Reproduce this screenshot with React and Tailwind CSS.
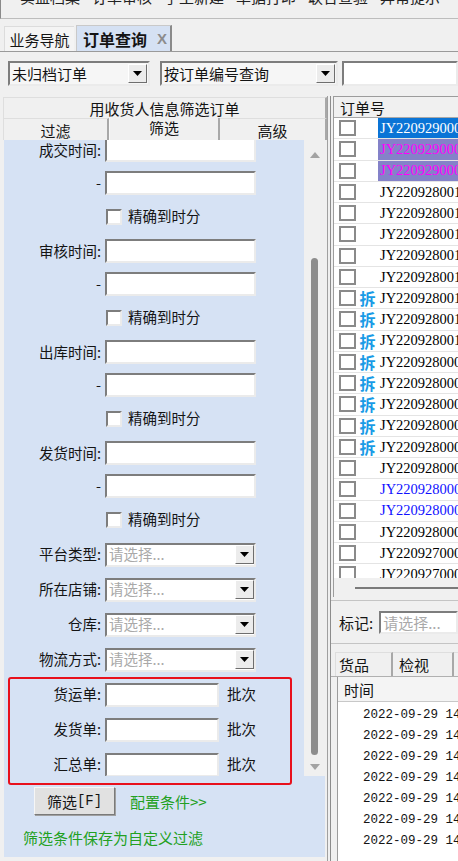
import React from 'react'

const cjk = "font-['Noto_Sans_CJK_SC','Noto_Sans',sans-serif]"
const sunken =
  'border-2 border-t-[#7d7d7d] border-l-[#7d7d7d] border-r-[#ebebeb] border-b-[#ebebeb]'
const raised =
  'border border-t-white border-l-white border-r-[#6e6e6e] border-b-[#6e6e6e]'

function Arrow() {
  return (
    <svg width="9" height="5" viewBox="0 0 9 5">
      <path d="M0 0h9L4.5 5z" fill="#000" />
    </svg>
  )
}

function DropBtn({ className = '' }) {
  return (
    <div className={`w-[19px] h-[19px] bg-[#ececec] flex items-center justify-center ${raised} ${className}`}>
      <Arrow />
    </div>
  )
}

function Combo({ className, text }) {
  return (
    <div className={`h-[25px] bg-[#f6f6f6] flex items-center ${sunken} ${className}`}>
      <span className="flex-1 pl-[2px] text-[15px] leading-none whitespace-nowrap">{text}</span>
      <DropBtn className="mr-[1px]" />
    </div>
  )
}

function TextBox({ className }) {
  return <div className={`h-[24px] bg-white ${sunken} ${className}`} />
}

function Label({ children }) {
  return (
    <div className="w-[98px] pr-[1px] text-right text-[14.5px] leading-none whitespace-nowrap">
      {children}
    </div>
  )
}

function DateGroup({ label }) {
  return (
    <>
      <div className="h-[34px] flex items-center">
        <Label>{label}:</Label>
        <TextBox className="ml-[3px] w-[151px]" />
      </div>
      <div className="h-[32px] flex items-center">
        <Label>-</Label>
        <TextBox className="ml-[3px] w-[151px]" />
      </div>
      <div className="h-[35px] flex items-center">
        <div className={`ml-[102px] w-[16px] h-[16px] bg-white ${sunken}`} />
        <span className="ml-[6px] text-[14.5px] leading-none">精确到时分</span>
      </div>
    </>
  )
}

function SelectRow({ label }) {
  return (
    <div className="h-[35px] flex items-center">
      <Label>{label}:</Label>
      <div className={`ml-[3px] w-[151px] h-[24px] bg-white flex items-center ${sunken}`}>
        <span className="flex-1 pl-[2px] text-[14.5px] text-[#a9a9a9] leading-none">请选择...</span>
        <DropBtn />
      </div>
    </div>
  )
}

function BatchRow({ label, h }) {
  return (
    <div className={`${h} flex items-center`}>
      <Label>{label}:</Label>
      <TextBox className="ml-[3px] w-[114px]" />
      <span className="ml-[8px] text-[14.5px] leading-none">批次</span>
    </div>
  )
}

const orders = [
  { no: 'JY22092900018', kind: 'sel' },
  { no: 'JY22092900017', kind: 'purple' },
  { no: 'JY22092900016', kind: 'purple' },
  { no: 'JY22092800198' },
  { no: 'JY22092800197' },
  { no: 'JY22092800196' },
  { no: 'JY22092800195' },
  { no: 'JY22092800194' },
  { no: 'JY22092800193', split: true },
  { no: 'JY22092800192', split: true },
  { no: 'JY22092800191', split: true },
  { no: 'JY22092800099', split: true },
  { no: 'JY22092800098', split: true },
  { no: 'JY22092800097', split: true },
  { no: 'JY22092800096', split: true },
  { no: 'JY22092800095', split: true },
  { no: 'JY22092800094' },
  { no: 'JY22092800093', kind: 'blue' },
  { no: 'JY22092800092', kind: 'blue' },
  { no: 'JY22092800091' },
  { no: 'JY22092700029' },
  { no: 'JY22092700028' },
]

function OrderRow({ row }) {
  let cell = 'text-black'
  if (row.kind === 'sel') cell = 'bg-[#0a74d6] text-white'
  if (row.kind === 'purple') cell = 'bg-[#8482c8] text-[#ff00ff]'
  if (row.kind === 'blue') cell = 'text-[#1010ff]'
  return (
    <div className="h-[21.25px] flex items-stretch border-b border-[#e4e4e4] bg-white overflow-hidden">
      <div className="ml-[5px] self-center w-[17px] h-[16px] border-2 border-[#8a8a8a] bg-white" />
      <div className="w-[21px] ml-[1px] flex items-center justify-center overflow-hidden text-[16px] font-bold leading-none text-[#1a9be6]">
        {row.split ? '拆' : ''}
      </div>
      <div className={`flex-1 flex items-center pl-[2px] whitespace-nowrap overflow-hidden font-['Liberation_Serif',serif] text-[14.5px] leading-none ${cell}`}>
        {row.no}
      </div>
    </div>
  )
}

const dates = ['14:35:21', '14:33:08', '14:30:52', '14:28:17', '14:25:40', '14:21:03', '14:18:46']

function LeftPanel() {
  return (
    <div className="ml-[3px] w-[325px] flex flex-col border-r border-[#a0a0a0]">
      <div className="mt-[1px] h-[21px] flex items-center justify-center bg-[#f0f0f0] border-t border-l border-[#dedede] border-r-2 border-r-[#a8a8a8] text-[15px] leading-none">
        用收货人信息筛选订单
      </div>
      <div className="h-[22px] flex">
        <div className="w-[106px] h-[22px] flex items-center justify-center pt-[1px] border-t border-l border-[#dedede] border-r-2 border-r-[#a8a8a8] text-[15px] leading-none">
          过滤
        </div>
        <div className="w-[111px] h-[22px] flex items-start pt-[2px] justify-center border-l border-[#f8f8f8] border-r-2 border-r-[#a8a8a8] text-[15px] leading-none">
          筛选
        </div>
        <div className="flex-1 h-[22px] flex items-center justify-center pt-[1px] border-t border-[#dedede] border-r-2 border-r-[#a8a8a8] text-[15px] leading-none">
          高级
        </div>
      </div>
      <div className="pl-[1px]">
        <div className="h-[636px] flex">
          <div className="w-[300px] bg-[#d6e2f4] overflow-hidden">
            <div className="-mt-[7px]">
              <DateGroup label="成交时间" />
              <DateGroup label="审核时间" />
              <DateGroup label="出库时间" />
              <DateGroup label="发货时间" />
              <SelectRow label="平台类型" />
              <SelectRow label="所在店铺" />
              <SelectRow label="仓库" />
              <SelectRow label="物流方式" />
              <BatchRow label="货运单" h="h-[35px]" />
              <BatchRow label="发货单" h="h-[35px]" />
              <BatchRow label="汇总单" h="h-[35px]" />
            </div>
          </div>
          <div className="w-[21px] bg-[#f0f0f0] flex flex-col items-center">
            <svg className="mt-[12px]" width="10" height="6" viewBox="0 0 10 6">
              <path d="M0 6L5 0L10 6z" fill="#a3a3a3" />
            </svg>
            <div className="mt-[100px] w-[7px] h-[497px] rounded-full bg-[#8d8d8d]" />
            <svg className="mt-[9px]" width="10" height="6" viewBox="0 0 10 6">
              <path d="M0 0h10L5 6z" fill="#a3a3a3" />
            </svg>
          </div>
        </div>
        <div className="w-[321px] h-[81px] bg-[#d6e2f4]">
          <div className="pt-[11px] flex items-center">
            <div className="ml-[30px] w-[81px] h-[28px] flex items-center justify-center bg-[#e1e1e1] border border-t-[#f6f6f6] border-l-[#f6f6f6] border-r-[#7a7a7a] border-b-[#7a7a7a] shadow-[1px_1px_0_#a0a0a0] text-[15px] leading-none">
              筛选<span className="font-['Liberation_Mono',monospace] text-[14px]">[F]</span>
            </div>
            <span className="ml-[15px] text-[15px] leading-none text-[#22a022]">配置条件&gt;&gt;</span>
          </div>
          <div className="mt-[15px] ml-[19px] text-[15px] leading-none text-[#22a022]">
            筛选条件保存为自定义过滤
          </div>
        </div>
      </div>
    </div>
  )
}

function RightPanel() {
  return (
    <div className="ml-[2px] flex-1 flex flex-col border-l border-[#8c8c8c] min-w-0">
      <div className="ml-[2px] h-[501px] flex flex-col border-l border-t border-[#9c9c9c]">
        <div className="h-[21px] flex items-center pl-[6px] bg-[#f0f0f0] border-b border-[#a8a8a8] text-[15px] leading-none">
          订单号
        </div>
        <div className="h-[460px] overflow-hidden bg-white">
          {orders.map((r) => (
            <OrderRow key={r.no} row={r} />
          ))}
        </div>
        <div className="h-[19px] bg-[#f0f0f0] pt-[9px] pl-[21px]">
          <div className="h-[2px] bg-[#7a7a7a]" />
        </div>
      </div>
      <div className="mt-[3px] h-[44px] flex items-center border-t border-b border-[#c4c4c4]">
        <span className="ml-[8px] text-[15px] leading-none">标记:</span>
        <div className={`ml-[6px] flex-1 h-[23px] bg-white flex items-center ${sunken}`}>
          <span className="pl-[2px] text-[15px] text-[#a9a9a9] leading-none whitespace-nowrap">请选择...</span>
        </div>
      </div>
      <div className="mt-[8px] h-[25px] flex items-end border-b border-[#b0b0b0]">
        <div className="ml-[4px] w-[58px] h-[24px] flex items-center pl-[3px] border-t border-l border-[#dedede] border-r-2 border-r-[#a8a8a8] text-[15px] leading-none">
          货品
        </div>
        <div className="w-[61px] h-[24px] flex items-center pl-[6px] border-t border-[#dedede] border-r-2 border-r-[#a8a8a8] text-[15px] leading-none">
          检视
        </div>
        <div className="flex-1 h-[24px] border-t border-[#dedede]" />
      </div>
      <div className="ml-[6px] flex-1 flex flex-col border-l border-[#9c9c9c] bg-white">
        <div className="h-[25px] flex items-center pl-[6px] bg-[#f4f4f4] border-b border-[#c8c8c8] text-[15px] leading-none">
          时间
        </div>
        <div className="pt-[3px]">
          {dates.map((t) => (
            <div
              key={t}
              className="h-[21px] flex items-center pl-[25px] whitespace-nowrap font-['Liberation_Mono',monospace] text-[12.5px] leading-none"
            >
              2022-09-29 {t}
            </div>
          ))}
        </div>
      </div>
    </div>
  )
}

export default function App() {
  return (
    <div className={`relative w-[458px] h-[861px] overflow-hidden bg-[#f0f0f0] text-[#141414] ${cjk}`}>
      <div className="h-[19px] border-b border-[#bdbdbd] border-l border-l-[#8a8a8a] overflow-hidden">
        <div className="flex gap-[12px] pl-[19px] -mt-[11px] text-[15px] leading-[16px] text-[#222] whitespace-nowrap">
          <span>实盘档案</span>
          <span>订单审核</span>
          <span>手工新建</span>
          <span>单据打印</span>
          <span>联合查验</span>
          <span>异常提示</span>
        </div>
      </div>

      <div className="mt-[6px] h-[27px] flex items-end border-b border-[#9a9a9a] pl-[4px]">
        <div className="h-[25px] w-[70px] flex items-center justify-center text-[15px] leading-none bg-[#f4f4f4] border-t border-l border-[#dcdcdc]">
          业务导航
        </div>
        <div className="h-[26px] w-[96px] ml-[2px] flex items-center pl-[6px] gap-[10px] bg-[#d5e1f3] border-t border-l border-[#c9c9c9] border-r-2 border-r-[#8a8a8a] text-[16px] font-bold leading-none">
          订单查询
          <span className="text-[#8c8c8c] text-[15px] font-['Liberation_Sans',sans-serif]">X</span>
        </div>
      </div>

      <div className="mt-[9px] h-[25px] flex">
        <Combo className="ml-[8px] w-[142px]" text="未归档订单" />
        <Combo className="ml-[10px] w-[178px]" text="按订单编号查询" />
        <div className={`ml-[4px] flex-1 h-[25px] bg-white ${sunken}`} />
      </div>

      <div className="mt-[10px] h-[765px] flex">
        <LeftPanel />
        <RightPanel />
      </div>

      <div className="absolute left-[8px] top-[677px] w-[284px] h-[108px] border-2 border-[#e8101c] rounded-[3px] pointer-events-none" />
    </div>
  )
}
